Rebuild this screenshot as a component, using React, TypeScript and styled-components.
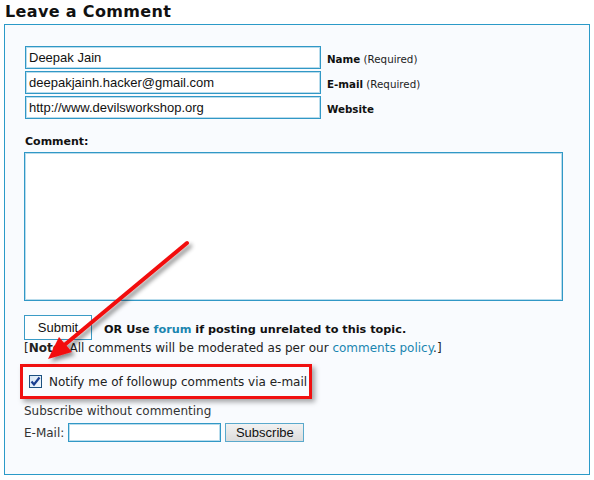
import React from "react";
import styled, { createGlobalStyle } from "styled-components";

const GlobalStyle = createGlobalStyle`
  html, body {
    margin: 0;
    padding: 0;
    background: #fff;
  }
  body {
    font-family: "DejaVu Sans", Verdana, sans-serif;
    color: #222;
  }
`;

const Page = styled.div`
  position: relative;
  width: 594px;
  height: 480px;
  overflow: hidden;
`;

const Title = styled.h2`
  margin: 0;
  padding: 2px 0 0 5px;
  height: 22px;
  font-family: "DejaVu Sans", Verdana, sans-serif;
  font-size: 16px;
  font-weight: bold;
  color: #111;
  letter-spacing: 0.35px;
`;

const Panel = styled.div`
  margin-left: 4px;
  width: 586px;
  height: 451px;
  border: 1px solid #2b9ac8;
  background: #f9fbfe;
  padding: 21px 0 0 19px;
  box-sizing: border-box;
  display: flex;
  flex-direction: column;
`;

const FieldRow = styled.div`
  display: flex;
  align-items: center;
  height: 23px;
  margin-bottom: 2px;
  margin-left: 1px;
`;

const TextBox = styled.div<{ w: number; h: number }>`
  width: ${({ w }) => w}px;
  height: ${({ h }) => h}px;
  box-sizing: border-box;
  border: 1px solid #3198c6;
  box-shadow: inset 0 0 0 1px #b9dcec;
  background: #fff;
  font-family: "Liberation Sans", Arial, sans-serif;
  font-size: 13px;
  color: #111;
  padding: 0 0 0 3px;
  display: flex;
  align-items: center;
  white-space: nowrap;
  overflow: hidden;
`;

const FieldLabel = styled.span`
  margin-left: 6px;
  font-size: 10.3px;
  color: #222;
  padding-top: 3px;
  b {
    color: #111;
  }
`;

const CommentLabel = styled.div`
  margin-top: 14px;
  margin-left: 1px;
  font-size: 11px;
  font-weight: bold;
  color: #111;
  height: 17px;
`;

const SubmitRow = styled.div`
  display: flex;
  align-items: center;
  margin-top: 14px;
  height: 25px;
`;

const Button = styled.div<{ grey?: boolean }>`
  box-sizing: border-box;
  display: flex;
  align-items: center;
  justify-content: center;
  font-family: "Liberation Sans", Arial, sans-serif;
  font-size: 13px;
  color: #111;
  border: 1px solid ${({ grey }) => (grey ? "#5aa9cc" : "#3a9bc6")};
  background: ${({ grey }) => (grey ? "linear-gradient(#f2f2f2, #dcdcdc)" : "#fff")};
`;

const OrText = styled.span`
  margin-left: 12px;
  font-size: 11.25px;
  font-weight: bold;
  color: #111;
  padding-top: 3px;
`;

const Link = styled.span<{ bold?: boolean }>`
  color: #1a85b0;
  font-weight: ${({ bold }) => (bold ? "bold" : "normal")};
`;

const Note = styled.div`
  font-size: 12px;
  color: #222;
  height: 16px;
  margin-top: 1px;
  white-space: nowrap;
`;

const NotifyBox = styled.div`
  margin-top: 7px;
  margin-left: -4px;
  width: 292px;
  height: 35px;
  box-sizing: border-box;
  border: 3px solid #f01010;
  box-shadow: 3px 3px 5px rgba(0, 0, 0, 0.35);
  display: flex;
  align-items: center;
  padding-left: 6px;
  font-size: 12px;
  color: #222;
`;

const Check = styled.span`
  width: 13px;
  height: 13px;
  box-sizing: border-box;
  border: 1px solid #1c5180;
  background: linear-gradient(135deg, #d5e6f5, #f4f8fc);
  margin-right: 7px;
  display: flex;
  align-items: center;
  justify-content: center;
`;

const SubscribeText = styled.div`
  margin-top: 5px;
  font-size: 12px;
  color: #333;
  height: 16px;
  white-space: nowrap;
`;

const EmailRow = styled.div`
  display: flex;
  align-items: center;
  margin-top: 3px;
  height: 19px;
  font-size: 12px;
  color: #333;
  gap: 4px;
`;

const Overlay = styled.svg`
  position: absolute;
  left: 0;
  top: 0;
  pointer-events: none;
`;

export default function App() {
  return (
    <Page>
      <GlobalStyle />
      <Title>Leave a Comment</Title>
      <Panel>
        <FieldRow>
          <TextBox w={296} h={23}>Deepak Jain</TextBox>
          <FieldLabel>
            <b>Name</b> (Required)
          </FieldLabel>
        </FieldRow>
        <FieldRow>
          <TextBox w={296} h={23}>deepakjainh.hacker@gmail.com</TextBox>
          <FieldLabel>
            <b>E-mail</b> (Required)
          </FieldLabel>
        </FieldRow>
        <FieldRow>
          <TextBox w={296} h={23}>http://www.devilsworkshop.org</TextBox>
          <FieldLabel>
            <b>Website</b>
          </FieldLabel>
        </FieldRow>
        <CommentLabel>Comment:</CommentLabel>
        <TextBox w={539} h={149} />
        <SubmitRow>
          <Button style={{ width: 68, height: 25 }}>Submit</Button>
          <OrText>
            OR Use <Link bold>forum</Link> if posting unrelated to this topic.
          </OrText>
        </SubmitRow>
        <Note>
          [<b>Note:</b> All comments will be moderated as per our <Link>comments policy</Link>.]
        </Note>
        <NotifyBox>
          <Check>
            <svg width="11" height="11" viewBox="0 0 11 11">
              <path d="M1.5 5.5 L4 8.5 L9.5 1.5" fill="none" stroke="#1b3f8f" strokeWidth="2.2" />
            </svg>
          </Check>
          Notify me of followup comments via e-mail
        </NotifyBox>
        <SubscribeText>Subscribe without commenting</SubscribeText>
        <EmailRow>
          E-Mail:
          <TextBox w={153} h={19} />
          <Button grey style={{ width: 79, height: 19 }}>
            Subscribe
          </Button>
        </EmailRow>
      </Panel>
      <Overlay width="594" height="480" viewBox="0 0 594 480">
        <defs>
          <filter id="sh" x="-20%" y="-20%" width="140%" height="140%">
            <feDropShadow dx="3" dy="3" stdDeviation="2" floodColor="#000" floodOpacity="0.45" />
          </filter>
        </defs>
        <g filter="url(#sh)">
          <line x1="187" y1="243" x2="62" y2="347" stroke="#f20d0d" strokeWidth="4" strokeLinecap="round" />
          <polygon points="48,359 59,337 72,352" fill="#f20d0d" />
        </g>
      </Overlay>
    </Page>
  );
}
